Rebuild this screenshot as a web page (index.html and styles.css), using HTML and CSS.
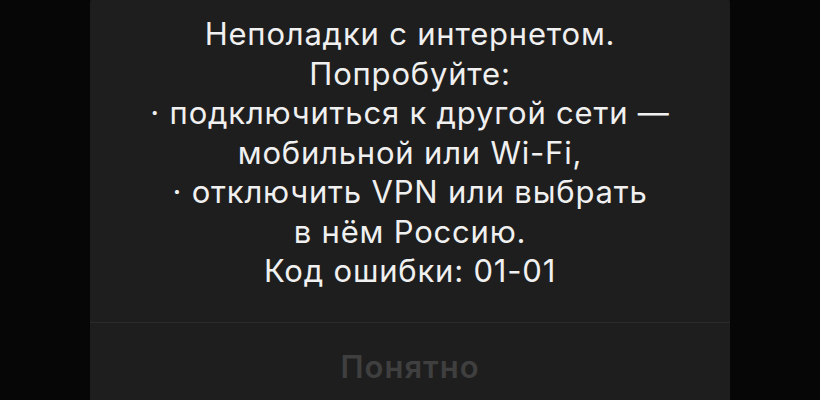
FILE: index.html
```html
<!DOCTYPE html>
<html lang="ru">
<head>
<meta charset="utf-8">
<title>Ошибка сети</title>
<link rel="stylesheet" href="styles.css">
</head>
<body>
  <div class="alert">
    <div class="alert-body">
      <p class="line">Неполадки с интернетом.</p>
      <p class="line">Попробуйте:</p>
      <p class="line">· подключиться к другой сети —</p>
      <p class="line">мобильной или Wi-Fi,</p>
      <p class="line">· отключить VPN или выбрать</p>
      <p class="line">в нём Россию.</p>
      <p class="line">Код ошибки: 01-01</p>
    </div>
    <div class="alert-actions">
      <button class="alert-button" type="button" disabled>Понятно</button>
    </div>
  </div>
</body>
</html>
```
FILE: styles.css
```css
html, body {
  margin: 0;
  padding: 0;
  background: #060606;
  height: 100%;
  overflow: hidden;
}

body {
  font-family: "Inter", "Noto Sans", sans-serif;
}

.alert {
  width: 640px;
  margin: -10px 0 0 90px;
  background: #1e1e1e;
  border-radius: 14px;
  height: 430px;
}

.alert-body {
  padding: 24px 0 31px;
  text-align: center;
  color: #f0f0f0;
  font-size: 31px;
  letter-spacing: 0.8px;
  line-height: 39.5px;
}

.line {
  margin: 0;
}

.alert-actions {
  border-top: 1px solid #2b2b2b;
  padding-top: 29px;
  display: flex;
  justify-content: center;
}

.alert-button {
  background: none;
  border: 0;
  padding: 0;
  font-family: inherit;
  font-size: 31px;
  letter-spacing: 1px;
  line-height: 30px;
  font-weight: 600;
  color: #3f3f3f;
}
```
